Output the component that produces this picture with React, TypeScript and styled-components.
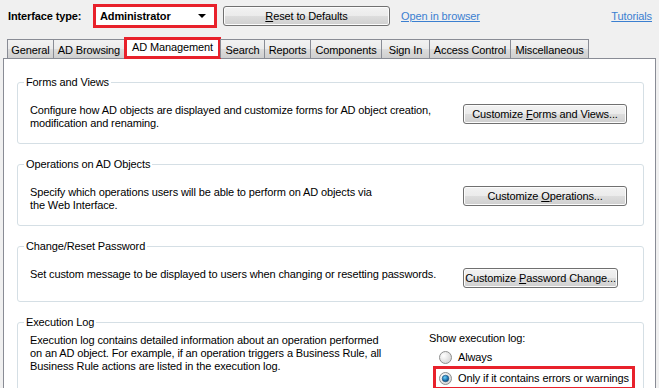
import React from "react";
import styled, { createGlobalStyle } from "styled-components";

const GlobalStyle = createGlobalStyle`
  html, body {
    margin: 0;
    padding: 0;
    background: #f0f0f0;
    overflow: hidden;
  }
  body {
    font-family: "Liberation Sans", Arial, sans-serif;
    font-size: 11px;
    letter-spacing: -0.12px;
    color: #000;
  }
`;

const Window = styled.div`
  width: 659px;
  height: 388px;
  overflow: hidden;
  background: #f0f0f0;
`;

const TopBar = styled.div`
  display: flex;
  align-items: center;
  height: 24px;
  padding: 4px 7px 0 8px;
`;

const TypeLabel = styled.span`
  font-weight: bold;
  width: 85px;
`;

const Highlight = styled.div`
  border: 3px solid #e8212b;
  background: #fff;
  box-sizing: border-box;
`;

const Combo = styled(Highlight)`
  display: flex;
  align-items: center;
  justify-content: space-between;
  width: 124px;
  height: 24px;
  padding: 0 8px 0 4px;
  font-weight: bold;
`;

const Arrow = styled.span`
  width: 0;
  height: 0;
  border-left: 4px solid transparent;
  border-right: 4px solid transparent;
  border-top: 4px solid #000;
`;

const Button = styled.button<{ $width: number }>`
  width: ${(p) => p.$width}px;
  height: 20px;
  padding: 0;
  font-family: inherit;
  font-size: 11px;
  letter-spacing: inherit;
  color: #000;
  white-space: nowrap;
  border: 1px solid #707070;
  border-radius: 3px;
  background: linear-gradient(#f2f2f2 0%, #ebebeb 50%, #dddddd 51%, #cfcfcf 100%);
  box-shadow: inset 0 0 0 1px #fcfcfc;
  text-align: center;
`;

const ResetButton = styled(Button)`
  margin-left: 6px;
`;

const Link = styled.a`
  color: #3b7fd0;
  text-decoration: underline;
  cursor: pointer;
`;

const OpenLink = styled(Link)`
  margin-left: 11px;
`;

const TutorialsLink = styled(Link)`
  margin-left: auto;
`;

const TabStrip = styled.div`
  display: flex;
  align-items: flex-end;
  height: 21px;
  margin-top: 9px;
  padding-left: 7px;
  position: relative;
  z-index: 1;
`;

const Tab = styled.div<{ $width: number }>`
  box-sizing: border-box;
  width: ${(p) => p.$width}px;
  height: 19px;
  margin-right: -1px;
  border: 1px solid #898c95;
  border-bottom: none;
  background: linear-gradient(#f2f2f2 0%, #ebebeb 50%, #dddddd 51%, #cfcfcf 100%);
  display: flex;
  align-items: center;
  justify-content: center;
  padding-top: 1px;
  white-space: nowrap;
`;

const ActiveTab = styled(Highlight)<{ $width: number }>`
  width: ${(p) => p.$width}px;
  height: 22px;
  margin: 0 -1px -1px 0;
  display: flex;
  align-items: center;
  justify-content: center;
  padding-bottom: 2px;
  white-space: nowrap;
`;

const Panel = styled.div`
  margin: 0 3px 0 3px;
  height: 340px;
  background: #fff;
  border: 1px solid #898c95;
  padding: 17px 11px 0 13px;
  display: flex;
  flex-direction: column;
  gap: 14px;
`;

const Group = styled.fieldset`
  margin: 0;
  padding: 0 15px 13px 12px;
  border: 1px solid #d5dfe5;
  border-radius: 3px;
  min-width: 0;
`;

const Legend = styled.legend`
  padding: 0 2px;
  margin-left: -6px;
  line-height: 13px;
`;

const GroupRow = styled.div`
  display: grid;
  grid-template-columns: 433px auto;
  align-items: start;
  padding-top: 15px;
`;

const Description = styled.div`
  line-height: 13px;
  white-space: nowrap;
`;

const LogRow = styled.div`
  display: grid;
  grid-template-columns: 399px auto;
  padding-top: 5px;
`;

const OptionList = styled.div`
  display: flex;
  flex-direction: column;
  align-items: flex-start;
  margin-top: -2px;
`;

const OptionTitle = styled.div`
  line-height: 13px;
  margin-bottom: 3px;
`;

const Option = styled.label`
  display: flex;
  align-items: center;
  gap: 6px;
  height: 18px;
  padding-left: 10px;
  white-space: nowrap;
`;

const SelectedOption = styled(Highlight)`
  display: flex;
  align-items: center;
  gap: 6px;
  height: 24px;
  margin-left: 4px;
  padding: 0 3px 0 3px;
  white-space: nowrap;
`;

const Key = styled.span`
  text-decoration: underline;
`;

const Radio = ({ checked }: { checked?: boolean }) => (
  <svg width="13" height="13" viewBox="0 0 13 13">
    <defs>
      <radialGradient id="rbg" cx="0.35" cy="0.35" r="0.8">
        <stop offset="0" stopColor="#ffffff" />
        <stop offset="1" stopColor="#cfcfcf" />
      </radialGradient>
      <radialGradient id="rdot" cx="0.4" cy="0.35" r="0.7">
        <stop offset="0" stopColor="#6ed0f6" />
        <stop offset="0.6" stopColor="#1f77b5" />
        <stop offset="1" stopColor="#0b3e6a" />
      </radialGradient>
    </defs>
    <circle cx="6.5" cy="6.5" r="6" fill="url(#rbg)" stroke="#8e8f8f" strokeWidth="1" />
    {checked && <circle cx="6.5" cy="6.5" r="3.3" fill="url(#rdot)" stroke="#1b4d78" strokeWidth="0.6" />}
  </svg>
);

const tabs = [
  { name: "General", width: 47 },
  { name: "AD Browsing", width: 72 },
  { name: "AD Management", width: 97, active: true },
  { name: "Search", width: 45 },
  { name: "Reports", width: 47 },
  { name: "Components", width: 72 },
  { name: "Sign In", width: 49 },
  { name: "Access Control", width: 82 },
  { name: "Miscellaneous", width: 79 },
];

export default function App() {
  return (
    <Window>
      <GlobalStyle />
      <TopBar>
        <TypeLabel>Interface type:</TypeLabel>
        <Combo>
          Administrator
          <Arrow />
        </Combo>
        <ResetButton $width={167}>
          <Key>R</Key>eset to Defaults
        </ResetButton>
        <OpenLink>Open in browser</OpenLink>
        <TutorialsLink>Tutorials</TutorialsLink>
      </TopBar>

      <TabStrip>
        {tabs.map((t) =>
          t.active ? (
            <ActiveTab key={t.name} $width={t.width}>
              {t.name}
            </ActiveTab>
          ) : (
            <Tab key={t.name} $width={t.width}>
              {t.name}
            </Tab>
          )
        )}
      </TabStrip>

      <Panel>
        <Group>
          <Legend>Forms and Views</Legend>
          <GroupRow>
            <Description>
              Configure how AD objects are displayed and customize forms for AD object creation,
              <br />
              modification and renaming.
            </Description>
            <Button $width={164}>
              Customize <Key>F</Key>orms and Views...
            </Button>
          </GroupRow>
        </Group>

        <Group>
          <Legend>Operations on AD Objects</Legend>
          <GroupRow>
            <Description>
              Specify which operations users will be able to perform on AD objects via
              <br />
              the Web Interface.
            </Description>
            <Button $width={164}>
              Customize <Key>O</Key>perations...
            </Button>
          </GroupRow>
        </Group>

        <Group>
          <Legend>Change/Reset Password</Legend>
          <GroupRow>
            <Description>
              Set custom message to be displayed to users when changing or resetting passwords.
            </Description>
            <Button $width={155}>
              Customize <Key>P</Key>assword Change...
            </Button>
          </GroupRow>
        </Group>

        <Group>
          <Legend>Execution Log</Legend>
          <LogRow>
            <Description>
              Execution log contains detailed information about an operation performed
              <br />
              on an AD object. For example, if an operation triggers a Business Rule, all
              <br />
              Business Rule actions are listed in the execution log.
            </Description>
            <OptionList>
              <OptionTitle>Show execution log:</OptionTitle>
              <Option>
                <Radio />
                Always
              </Option>
              <SelectedOption>
                <Radio checked />
                Only if it contains errors or warnings
              </SelectedOption>
            </OptionList>
          </LogRow>
        </Group>
      </Panel>
    </Window>
  );
}
